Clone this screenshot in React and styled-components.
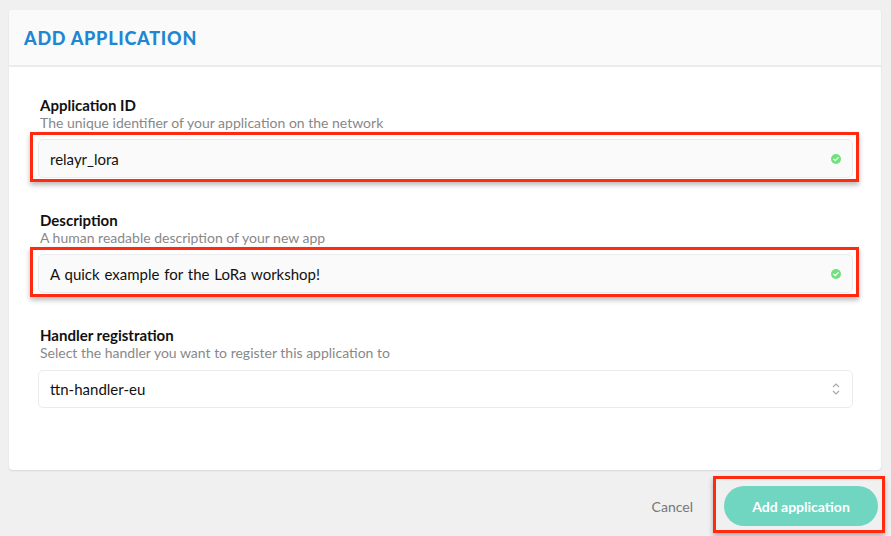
import React from "react";
import styled, { createGlobalStyle } from "styled-components";

const GlobalStyle = createGlobalStyle`
  body {
    margin: 0;
    background: #f0f0f0;
    font-family: Lato, "Open Sans", sans-serif;
    color: #111;
  }
`;

const fields = [
  {
    label: "Application ID",
    hint: "The unique identifier of your application on the network",
    value: "relayr_lora",
    valid: true,
  },
  {
    label: "Description",
    hint: "A human readable description of your new app",
    value: "A quick example for the LoRa workshop!",
    valid: true,
  },
];

const Check = () => (
  <CheckMark viewBox="0 0 10 10">
    <circle cx="5" cy="5" r="5" fill="#6fe27d" />
    <path d="M2.8 5.2 L4.3 6.6 L7.2 3.6" fill="none" stroke="#fff" strokeWidth="1.3" strokeLinecap="round" strokeLinejoin="round" />
  </CheckMark>
);

const App = () => {
  return (
    <Page>
      <GlobalStyle />
      <Card>
        <CardHeader>
          <Title>Add Application</Title>
        </CardHeader>
        <CardBody>
          {fields.map((f) => (
            <Field key={f.label}>
              <Label>{f.label}</Label>
              <Hint>{f.hint}</Hint>
              <Highlight>
                <InputBox>
                  <InputText>{f.value}</InputText>
                  {f.valid && <Check />}
                </InputBox>
              </Highlight>
            </Field>
          ))}
          <Field>
            <Label>Handler registration</Label>
            <Hint>Select the handler you want to register this application to</Hint>
            <SelectBox>
              <InputText>ttn-handler-eu</InputText>
              <Arrows viewBox="0 0 10 16">
                <path d="M2 6 L5 3 L8 6" fill="none" stroke="#aaa" strokeWidth="1.2" />
                <path d="M2 10 L5 13 L8 10" fill="none" stroke="#aaa" strokeWidth="1.2" />
              </Arrows>
            </SelectBox>
          </Field>
        </CardBody>
      </Card>
      <Footer>
        <CancelLink>Cancel</CancelLink>
        <Highlight $button>
          <SubmitButton>Add application</SubmitButton>
        </Highlight>
      </Footer>
    </Page>
  );
};

export default App;

const Page = styled.div`
  padding: 10px 10px 0 9px;
  height: 526px;
`;
const Card = styled.div`
  background: #fff;
  border-radius: 4px;
  box-shadow: 0 1px 2px rgba(0, 0, 0, 0.1);
  overflow: hidden;
`;
const CardHeader = styled.div`
  background: #fafafa;
  border-bottom: 2px solid #ececec;
  height: 55px;
  display: flex;
  align-items: center;
  padding-left: 15px;
`;
const Title = styled.h1`
  margin: 0;
  font-family: Lato, sans-serif;
  font-weight: 900;
  font-size: 18px;
  letter-spacing: 0.75px;
  text-transform: uppercase;
  color: #1f86d2;
`;
const CardBody = styled.div`
  padding: 29px 28px 62px 29px;
  display: flex;
  flex-direction: column;
  gap: 33px;
`;
const Field = styled.div`
  display: flex;
  flex-direction: column;
`;
const Label = styled.div`
  font-size: 15px;
  font-weight: 700;
  line-height: 18px;
  padding-left: 2px;
`;
const Hint = styled.div`
  font-size: 14px;
  color: #888;
  line-height: 16px;
  padding-left: 2px;
  margin-top: 1px;
  margin-bottom: 8px;
`;
const Highlight = styled.div`
  position: relative;
  &::after {
    content: "";
    position: absolute;
    inset: ${(p) => (p.$button ? "-10px -7px -7px -11px" : "-7px -6px -4px -8px")};
    border: 3px solid #ff2a10;
    box-shadow: 0 3px 5px rgba(0, 0, 0, 0.28);
    pointer-events: none;
  }
`;
const InputBox = styled.div`
  height: 39px;
  box-sizing: border-box;
  background: #fafafa;
  border: 1px solid #ebebeb;
  border-radius: 5px;
  display: flex;
  align-items: center;
  justify-content: space-between;
  padding: 0 11px 0 11px;
`;
const SelectBox = styled(InputBox)`
  background: #fff;
  height: 38px;
  margin-top: 1px;
`;
const InputText = styled.span`
  font-size: 15px;
  word-spacing: 1px;
  color: #111;
`;
const CheckMark = styled.svg`
  width: 10px;
  height: 10px;
`;
const Arrows = styled.svg`
  width: 10px;
  height: 16px;
`;
const Footer = styled.div`
  display: flex;
  justify-content: flex-end;
  align-items: center;
  gap: 31px;
  margin-top: 16px;
  padding-right: 3px;
`;
const CancelLink = styled.span`
  font-size: 14px;
  color: #777;
`;
const SubmitButton = styled.button`
  height: 40px;
  width: 154px;
  border: none;
  border-radius: 20px;
  background: #70d6c1;
  color: #fff;
  font-family: Lato, sans-serif;
  font-size: 14px;
  font-weight: 700;
  cursor: pointer;
`;
